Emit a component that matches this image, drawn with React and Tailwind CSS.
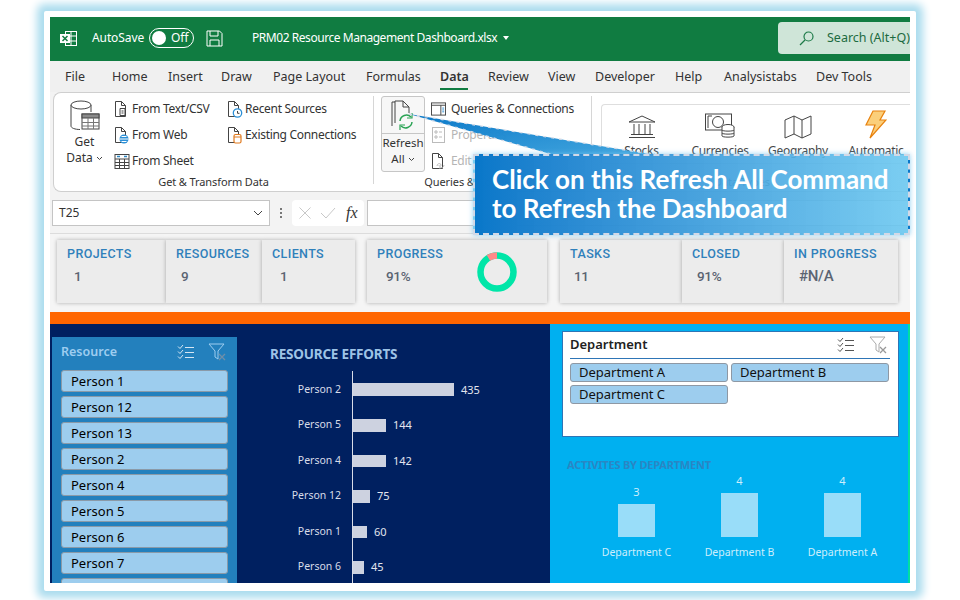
const uiFont = "font-['Noto_Sans','Open_Sans',sans-serif]";

const tabs = [
  { label: "File", width: "w-[47px]" },
  { label: "Home", width: "w-[56px]" },
  { label: "Insert", width: "w-[53px]" },
  { label: "Draw", width: "w-[52px]" },
  { label: "Page Layout", width: "w-[93px]" },
  { label: "Formulas", width: "w-[74px]" },
  { label: "Data", width: "w-[48px]", active: true },
  { label: "Review", width: "w-[60px]" },
  { label: "View", width: "w-[47px]" },
  { label: "Developer", width: "w-[80px]" },
  { label: "Help", width: "w-[49px]" },
  { label: "Analysistabs", width: "w-[92px]" },
  { label: "Dev Tools", width: "w-[80px]" },
];

const people = ["Person 1", "Person 12", "Person 13", "Person 2", "Person 4", "Person 5", "Person 6", "Person 7", ""];

const efforts = [
  { name: "Person 2", value: 435, bar: "w-[101px] h-[13px]" },
  { name: "Person 5", value: 144, bar: "w-[33px] h-[13px]" },
  { name: "Person 4", value: 142, bar: "w-[33px] h-[12px]" },
  { name: "Person 12", value: 75, bar: "w-[17px] h-[13px]" },
  { name: "Person 1", value: 60, bar: "w-[14px] h-[12px]" },
  { name: "Person 6", value: 45, bar: "w-[11px] h-[13px]" },
];

const departments = [
  { name: "Department C", value: 3, bar: "h-[33px]" },
  { name: "Department B", value: 4, bar: "h-[44px]" },
  { name: "Department A", value: 4, bar: "h-[44px]" },
];

function ExcelIcon() {
  return (
    <svg width="17" height="17" viewBox="0 0 17 17" fill="none" stroke="#fff">
      <rect x="5.5" y="1.5" width="11" height="14" />
      <path d="M11 1.5v14M5.5 6h11M5.5 11h11" />
      <rect x="0" y="4" width="10" height="9" fill="#fff" stroke="none" />
      <path d="M2.5 6l5 5M7.5 6l-5 5" stroke="#107c41" strokeWidth="1.5" />
    </svg>
  );
}

function SaveIcon() {
  return (
    <svg width="17" height="17" viewBox="0 0 17 17" fill="none" stroke="#fff">
      <path d="M1 1h12.5L16 3.5V16H1z" />
      <path d="M4 1v5h8V1M4 16v-6h9v6" />
    </svg>
  );
}

function DocIcon({ children }) {
  return (
    <svg width="16" height="18" viewBox="0 0 16 18" fill="none" className="shrink-0">
      <path d="M1.5 16.5V1.5h6l4 4v11z" stroke="#444" fill="#fff" />
      <path d="M7.5 1.5v4h4" stroke="#444" />
      {children}
    </svg>
  );
}

function GridIcon() {
  return (
    <svg width="16" height="17" viewBox="0 0 16 17" fill="none" stroke="#444" className="shrink-0">
      <rect x="1" y="1.5" width="14" height="14" fill="#fff" />
      <path d="M1 6h14M1 9.5h14M1 12.5h14M5.5 6v9.5M10.5 6v9.5" />
      <path d="M3 3.5h3M10 3.5h3" stroke="#2e86c1" strokeWidth="1.5" />
    </svg>
  );
}

function ChecklistIcon({ color }) {
  return (
    <svg width="18" height="16" viewBox="0 0 18 16" fill="none" stroke={color} strokeWidth="1">
      <path d="M1 2.5l2 2 3-3.5M1 7.5l2 2 3-3.5M1 12.5l2 2 3-3.5" />
      <path d="M8 3.5h9M8 8.5h9M8 13.5h9" />
    </svg>
  );
}

function FilterClearIcon({ color, cross }) {
  return (
    <svg width="18" height="18" viewBox="0 0 18 18" fill="none" stroke={color}>
      <path d="M1 1h15l-6 7v8l-3-2V8z" />
      <path d="M11 11l6 6M17 11l-6 6" stroke={cross} strokeWidth="1.3" />
    </svg>
  );
}

function RibbonRow({ icon, label, muted, gap = "gap-[3px]" }) {
  return (
    <div className={`flex items-center h-[26px] text-[12px] tracking-[-0.3px] whitespace-nowrap ${gap} ${muted ? "text-[#b5b5b5]" : "text-[#333]"}`}>
      <span className="w-[15px] flex justify-center">{icon}</span>
      {label}
    </div>
  );
}

function DataType({ label, width, children }) {
  return (
    <div className={`flex flex-col items-center ${width}`}>
      <div className="h-[34px] flex items-end">{children}</div>
      <span className="text-[12px] tracking-[-0.3px] text-[#444] mt-[3px]">{label}</span>
    </div>
  );
}

function Kpi({ label, value, width, valueIndent, children }) {
  return (
    <div className={`relative h-[63px] bg-[#ececec] shadow-[0_0_4px_rgba(0,0,0,0.3)] pl-[10px] pt-[5px] font-['Roboto',sans-serif] ${width}`}>
      <div className="text-[12.5px] font-medium tracking-[0.4px] leading-[17px] text-[#2f80bb] whitespace-nowrap">{label}</div>
      <div className={`text-[13.5px] font-medium tracking-[-0.3px] leading-[20px] mt-[4px] text-[#5b6472] ${valueIndent}`}>{value}</div>
      {children}
    </div>
  );
}

export default function App() {
  return (
    <div className={`w-[960px] h-[600px] bg-white pt-[11px] pl-[44px] overflow-hidden ${uiFont}`}>
      <div className="relative w-[872px] h-[580px] bg-white p-[6px] pb-[8px] rounded-[2px] shadow-[0_0_8px_7px_#abdcee]">
        <div className="w-[860px] h-[566px] overflow-hidden bg-[#f3f3f3] flex flex-col">
          {/* Title bar */}
          <div className="h-[44px] shrink-0 bg-[#107c41] flex items-center pb-[2px] text-white text-[12px]">
            <div className="ml-[10px]"><ExcelIcon /></div>
            <span className="ml-[15px] w-[50px] tracking-[-0.1px] whitespace-nowrap">AutoSave</span>
            <div className="ml-[7px] w-[45px] h-[20px] rounded-full border border-white flex items-center pl-[2px]">
              <span className="w-[14px] h-[14px] rounded-full bg-white" />
              <span className="ml-[5px] text-[12px] leading-none">Off</span>
            </div>
            <div className="ml-[12px]"><SaveIcon /></div>
            <span className="ml-[29px] w-[249px] whitespace-nowrap tracking-[-0.45px]">PRM02 Resource Management Dashboard.xlsx</span>
            <span className="ml-[2px] w-0 h-0 border-x-[3px] border-x-transparent border-t-[4px] border-t-white" />
            <div className="ml-auto w-[132px] h-[32px] bg-[#cfe5d8] rounded-l-[4px] flex items-center text-[#1d6b40] text-[12.5px] pl-[21px] gap-[13px] whitespace-nowrap overflow-hidden">
              <svg width="15" height="15" viewBox="0 0 15 15" fill="none" stroke="#1d7a48" strokeWidth="1.2" className="shrink-0">
                <circle cx="9.5" cy="5.5" r="4.5" />
                <path d="M6 9l-5 5" />
              </svg>
              Search (Alt+Q)
            </div>
          </div>

          {/* Tabs */}
          <div className="h-[31px] shrink-0 bg-[#f0f0f0] flex items-center pl-[15px] pt-[2px] text-[12.5px] text-[#333]">
            {tabs.map((tab) => (
              <div key={tab.label} className={`relative shrink-0 whitespace-nowrap ${tab.width} ${tab.active ? "font-semibold" : ""}`}>
                {tab.label}
                {tab.active && <span className="absolute left-0 top-[20px] w-[28px] h-[2px] bg-[#107c41]" />}
              </div>
            ))}
          </div>

          {/* Ribbon */}
          <div className="h-[100px] shrink-0 ml-[3px] bg-white border-t border-b border-l border-[#cfcfcf] rounded-bl-[8px] rounded-tl-[8px] flex">
            <div className="w-[319px] shrink-0 flex flex-col">
              <div className="flex h-[78px] pt-[3px]">
                <div className="w-[59px] ml-[1px] flex flex-col items-center text-[12px] text-[#333] leading-[16px]">
                  <svg width="30" height="32" viewBox="0 0 30 32" fill="none" stroke="#444" className="mt-[4px]">
                    <path d="M1 5v21c0 2 4 3.5 9 3.5M21 5v7" />
                    <ellipse cx="11" cy="5" rx="10" ry="4" fill="#fff" />
                    <rect x="12" y="14" width="17" height="15" fill="#fff" />
                    <rect x="12" y="14" width="17" height="4" fill="#8a8a8a" />
                    <path d="M12 22.500h17M12 26h17M18 18v11M23.500 18v11" stroke="#777" />
                  </svg>
                  <span className="mt-[2px]">Get</span>
                  <span className="flex items-center gap-[3px]">
                    Data
                    <svg width="7" height="5" viewBox="0 0 7 5" fill="none" stroke="#444"><path d="M1 1l2.500 2.500L6 1" /></svg>
                  </span>
                </div>
                <div className="w-[113px]">
                  <RibbonRow label="From Text/CSV" icon={<DocIcon><path d="M6 8.500h5v7H6zM7.500 11h2M7.500 13h2" stroke="#444" fill="#fff" /></DocIcon>} />
                  <RibbonRow label="From Web" icon={<DocIcon><circle cx="10" cy="13" r="4.500" fill="#2b8fd6" /><path d="M5.500 13h9M7.500 10.500h5M7.500 15.500h5" stroke="#fff" /></DocIcon>} />
                  <RibbonRow label="From Sheet" icon={<GridIcon />} />
                </div>
                <div>
                  <RibbonRow label="Recent Sources" icon={<DocIcon><circle cx="10.500" cy="13" r="4.200" fill="#fff" stroke="#2b8fd6" strokeWidth="1.300" /><path d="M10.500 11v2.300h2" stroke="#444" /></DocIcon>} />
                  <RibbonRow label="Existing Connections" icon={<DocIcon><rect x="7" y="8.500" width="7" height="8.500" rx="1.500" fill="#fff" stroke="#e07a1f" strokeWidth="1.200" /><path d="M7 11h7" stroke="#e07a1f" /></DocIcon>} />
                </div>
              </div>
              <div className="text-[11px] text-[#333] text-center tracking-[-0.1px] mt-[3px]">Get &amp; Transform Data</div>
            </div>
            <div className="w-px h-[88px] mt-[3px] bg-[#d6d6d6] shrink-0" />
            <div className="w-[217px] shrink-0 flex flex-col">
              <div className="flex h-[78px] pt-[3px] pl-[7px]">
                <div className="w-[44px] h-[76px] border border-[#c6c6c6] rounded-[3px] bg-[#f7f7f7] flex flex-col items-center text-[11.5px] text-[#333] leading-[16px]">
                  <div className="h-[37px] flex items-center border-b border-[#c6c6c6] w-full justify-center">
                    <svg width="28" height="32" viewBox="0 0 28 32" fill="none">
                      <path d="M3 27V3h3M6 24V2h8l6 6v6" stroke="#444" />
                      <path d="M14 2v6h6" stroke="#444" />
                      <path d="M11 22a6.500 6.500 0 0 1 11-4M23 23a6.500 6.500 0 0 1-11 4" stroke="#2aa354" strokeWidth="1.500" />
                      <path d="M23 14v5h-5M11 31v-5h5" stroke="#2aa354" strokeWidth="1.200" />
                    </svg>
                  </div>
                  <span className="mt-[1px]">Refresh</span>
                  <span className="flex items-center gap-[3px]">
                    All
                    <svg width="7" height="5" viewBox="0 0 7 5" fill="none" stroke="#444"><path d="M1 1l2.500 2.500L6 1" /></svg>
                  </span>
                </div>
                <div className="ml-[6px]">
                  <RibbonRow gap="gap-[5px]" label="Queries & Connections" icon={<svg width="16" height="14" viewBox="0 0 16 14" fill="none" stroke="#444"><rect x="0.500" y="0.500" width="15" height="13" /><path d="M0.500 3h15M10.500 3v10.500" /><path d="M12 6h2M12 8h2M12 10h2" stroke="#2b8fd6" /></svg>} />
                  <RibbonRow gap="gap-[5px]" muted label="Properties" icon={<svg width="13" height="16" viewBox="0 0 13 16" fill="none" stroke="#bbb"><rect x="0.500" y="0.500" width="12" height="15" /><path d="M3 4h2v2H3zM3 9h2v2H3zM7 5h3M7 10h3" /></svg>} />
                  <RibbonRow gap="gap-[5px]" muted label="Edit Links" icon={<DocIcon><path d="M6 14c0-3 4-3 4-1s-2 2-2 0M8 16c3 0 5-1 5-3" stroke="#bbb" /></DocIcon>} />
                </div>
              </div>
              <div className="text-[11px] text-[#333] text-center tracking-[-0.1px] mt-[3px]">Queries &amp; Connections</div>
            </div>
            <div className="w-px h-[88px] mt-[3px] bg-[#d6d6d6] shrink-0" />
            <div className="flex-1 flex flex-col pl-[9px]">
              <div className="h-[60px] mt-[11px] border-t border-b border-l border-[#dedede] rounded-l-[4px] flex">
                <DataType label="Stocks" width="w-[79px]">
                  <svg width="28" height="24" viewBox="0 0 28 24" fill="none" stroke="#444">
                    <path d="M1 7L14 1l13 6zM1 22.500h26M3 19.500h22M6 9v10M11 9v10M17 9v10M22 9v10" />
                  </svg>
                </DataType>
                <DataType label="Currencies" width="w-[78px]">
                  <svg width="30" height="26" viewBox="0 0 30 26" fill="none" stroke="#444">
                    <rect x="0.500" y="1" width="26" height="16" />
                    <path d="M3 3h4M3 3v12M24 15h-4" />
                    <circle cx="13" cy="9" r="5.500" />
                    <ellipse cx="23" cy="14" rx="6" ry="2.500" fill="#fff" />
                    <path d="M17 14v9c0 1.500 12 1.500 12 0v-9M17 17c0 1.500 12 1.500 12 0M17 20c0 1.500 12 1.500 12 0" fill="#fff" />
                  </svg>
                </DataType>
                <DataType label="Geography" width="w-[78px]">
                  <svg width="28" height="24" viewBox="0 0 28 24" fill="none" stroke="#444">
                    <path d="M1 5l9-4 8 4 9-4v18l-9 4-8-4-9 4zM10 1v18M18 5v18" />
                  </svg>
                </DataType>
                <DataType label="Automatic" width="w-[78px]">
                  <svg width="22" height="29" viewBox="0 0 22 29" fill="#fbcf7b" stroke="#e8820e" strokeWidth="1.200">
                    <path d="M8 1h12l-5 9h6L5 28l5-13H1z" />
                  </svg>
                </DataType>
              </div>
              <div className="text-[11px] text-[#333] text-center tracking-[-0.1px] mt-[10px] w-[300px] -ml-[9px]">Data Types</div>
            </div>
          </div>

          {/* Formula bar */}
          <div className="h-[42px] shrink-0 border-b border-[#dcdcdc] flex items-start pt-[8px] pl-[2px]">
            <div className="w-[218px] h-[26px] bg-white border border-[#c4c4c4] flex items-center justify-between pl-[6px] pr-[6px] text-[12px] text-[#333]">
              T25
              <svg width="10" height="6" viewBox="0 0 10 6" fill="none" stroke="#444"><path d="M1 1l4 4 4-4" /></svg>
            </div>
            <div className="w-[22px] h-[26px] flex flex-col items-center justify-center gap-[2px]">
              <span className="w-[2px] h-[2px] bg-[#777]" />
              <span className="w-[2px] h-[2px] bg-[#777]" />
              <span className="w-[2px] h-[2px] bg-[#777]" />
            </div>
            <div className="w-[72px] h-[26px] bg-white rounded-[4px] flex items-center pl-[6px] gap-[8px]">
              <svg width="14" height="14" viewBox="0 0 14 14" fill="none" stroke="#c8c8c8"><path d="M1.500 1.500l11 11M12.500 1.500l-11 11" /></svg>
              <svg width="16" height="12" viewBox="0 0 16 12" fill="none" stroke="#c8c8c8"><path d="M1 6l5 5L15 1" /></svg>
              <span className="text-[16px] italic font-['Liberation_Serif',serif] text-[#333] ml-[2px]">fx</span>
            </div>
            <div className="ml-[3px] flex-1 h-[26px] bg-white border border-[#c4c4c4]" />
          </div>

          {/* KPI strip */}
          <div className="h-[78px] shrink-0 bg-[#f5f5f5] flex items-start pt-[6px] pl-[7px]">
            <Kpi label="PROJECTS" value="1" width="w-[109px]" valueIndent="pl-[7px]" />
            <Kpi label="RESOURCES" value="9" width="w-[96px]" valueIndent="pl-[5px]" />
            <Kpi label="CLIENTS" value="1" width="w-[93px]" valueIndent="pl-[8px]" />
            <Kpi label="PROGRESS" value="91%" width="w-[180px] ml-[12px]" valueIndent="pl-[9px]">
              <svg width="40" height="40" viewBox="0 0 40 40" className="absolute left-[110px] top-[12px]">
                <circle cx="20" cy="20" r="16.500" fill="none" stroke="#00e6a8" strokeWidth="6.500" />
                <path d="M20 3.500A16.500 16.500 0 0 0 11.400 5.900" fill="none" stroke="#ff8a8a" strokeWidth="6.500" />
              </svg>
            </Kpi>
            <Kpi label="TASKS" value="11" width="w-[122px] ml-[13px]" valueIndent="pl-[4px]" />
            <Kpi label="CLOSED" value="91%" width="w-[102px]" valueIndent="pl-[5px]" />
            <Kpi label="IN PROGRESS" value="#N/A" width="w-[114px]" valueIndent="pl-[5px] text-[15px]" />
          </div>

          <div className="h-[12px] shrink-0 bg-[#ff6600]" />

          {/* Dashboard */}
          <div className="flex-1 min-h-0 flex overflow-hidden">
            <div className="w-[500px] shrink-0 bg-[#002060] flex">
              <div className="ml-[2px] mt-[13px] w-[185px] bg-[#2380bd] pl-[9px] pr-[9px] overflow-hidden">
                <div className="h-[20px] mt-[5px] flex items-center justify-between mb-[8px]">
                  <span className="text-[12.5px] font-semibold text-[#9dcdf0]">Resource</span>
                  <div className="flex items-center gap-[13px] mr-[2px]">
                    <ChecklistIcon color="#d5e6f3" />
                    <FilterClearIcon color="#9dcdf0" cross="#6f8fa8" />
                  </div>
                </div>
                <div className="flex flex-col gap-[4px]">
                  {people.map((person, i) => (
                    <div key={i} className="h-[22px] shrink-0 bg-[#9dcdee] border border-[#8a9aa8] rounded-[3px] pl-[9px] text-[13px] leading-[20px] text-black">
                      {person}
                    </div>
                  ))}
                </div>
              </div>
              <div className="ml-[33px] flex-1">
                <div className="mt-[21px] text-[13.5px] font-bold text-[#9dc3e6] tracking-[-0.2px] leading-[18px]">RESOURCE EFFORTS</div>
                <div className="ml-[82px] mt-[8px] pt-[1px] border-l border-[#d8dce8] h-[240px]">
                  {efforts.map((row) => (
                    <div key={row.name} className="relative h-[35.500px] flex items-center">
                      <span className="absolute right-full mr-[12px] text-[10.5px] text-[#d8dce8] whitespace-nowrap">{row.name}</span>
                      <div className={`bg-[#cdd2e0] ${row.bar}`} />
                      <span className="ml-[7px] text-[11px] text-[#e2e5ee]">{row.value}</span>
                    </div>
                  ))}
                </div>
              </div>
            </div>

            <div className="flex-1 bg-[#00b0f0] border-r-2 border-[#00e0a0] pl-[12px]">
              <div className="mt-[7px] w-[337px] h-[106px] bg-white border border-[#2e75b6] pl-[7px] pr-[8px]">
                <div className="h-[27px] flex items-center justify-between border-b border-[#2e75b6] pr-[3px]">
                  <span className="text-[13px] font-semibold text-[#222]">Department</span>
                  <div className="flex items-center gap-[14px]">
                    <ChecklistIcon color="#555" />
                    <FilterClearIcon color="#aaa" cross="#999" />
                  </div>
                </div>
                <div className="grid grid-cols-[158px_158px] gap-x-[3px] gap-y-[3px] mt-[4px]">
                  {["Department A", "Department B", "Department C"].map((d) => (
                    <div key={d} className="h-[19px] bg-[#9dcdee] border border-[#8e98a4] rounded-[3px] pl-[8px] text-[13px] leading-[17px] text-[#111]">{d}</div>
                  ))}
                </div>
              </div>
              <div className="ml-[5px] mt-[20px] text-[11px] font-bold text-[#2a86c4] tracking-[-0.2px] leading-[15px]">ACTIVITES BY DEPARTMENT</div>
              <div className="ml-[23px] w-[309px] h-[65px] grid grid-cols-3 items-end">
                {departments.map((d) => (
                  <div key={d.name} className="flex flex-col items-center">
                    <span className="text-[11px] leading-[15px] mb-[5px] text-[#cdeefc]">{d.value}</span>
                    <div className={`w-[37px] bg-[#99ddf9] ${d.bar}`} />
                  </div>
                ))}
              </div>
              <div className="ml-[23px] w-[309px] grid grid-cols-3 mt-[8px]">
                {departments.map((d) => (
                  <span key={d.name} className="text-center text-[10.5px] text-[#cdeefc] whitespace-nowrap">{d.name}</span>
                ))}
              </div>
            </div>
          </div>
        </div>

        {/* Callout over the sheet */}
        <svg width="300" height="50" viewBox="0 0 300 50" className="absolute left-[355px] top-[100px]">
          <defs>
            <linearGradient id="wedge" x1="0" x2="1" y1="0" y2="1">
              <stop offset="0" stopColor="#0a78c8" />
              <stop offset="1" stopColor="#3aa2dd" stopOpacity="0.95" />
            </linearGradient>
          </defs>
          <path d="M10 3L155 44H256z" fill="url(#wedge)" />
          <path d="M10 3L155 44M10 3L256 44" stroke="#d6dce8" strokeWidth="1.300" strokeDasharray="3 5" fill="none" />
        </svg>
        <div className="absolute left-[429px] top-[143px] w-[437px] h-[81px] border-2 border-dashed border-[#d3d9e6] bg-gradient-to-r from-[#0877c9] to-[#6cc8f0]/90 pl-[17px] pt-[9px] shadow-[0_0_5px_rgba(120,200,240,0.8)] font-['Lato',sans-serif] font-bold text-white text-[26px] leading-[29px] whitespace-nowrap">
          <div>Click on this Refresh All Command</div>
          <div>to Refresh the Dashboard</div>
        </div>
      </div>
    </div>
  );
}
